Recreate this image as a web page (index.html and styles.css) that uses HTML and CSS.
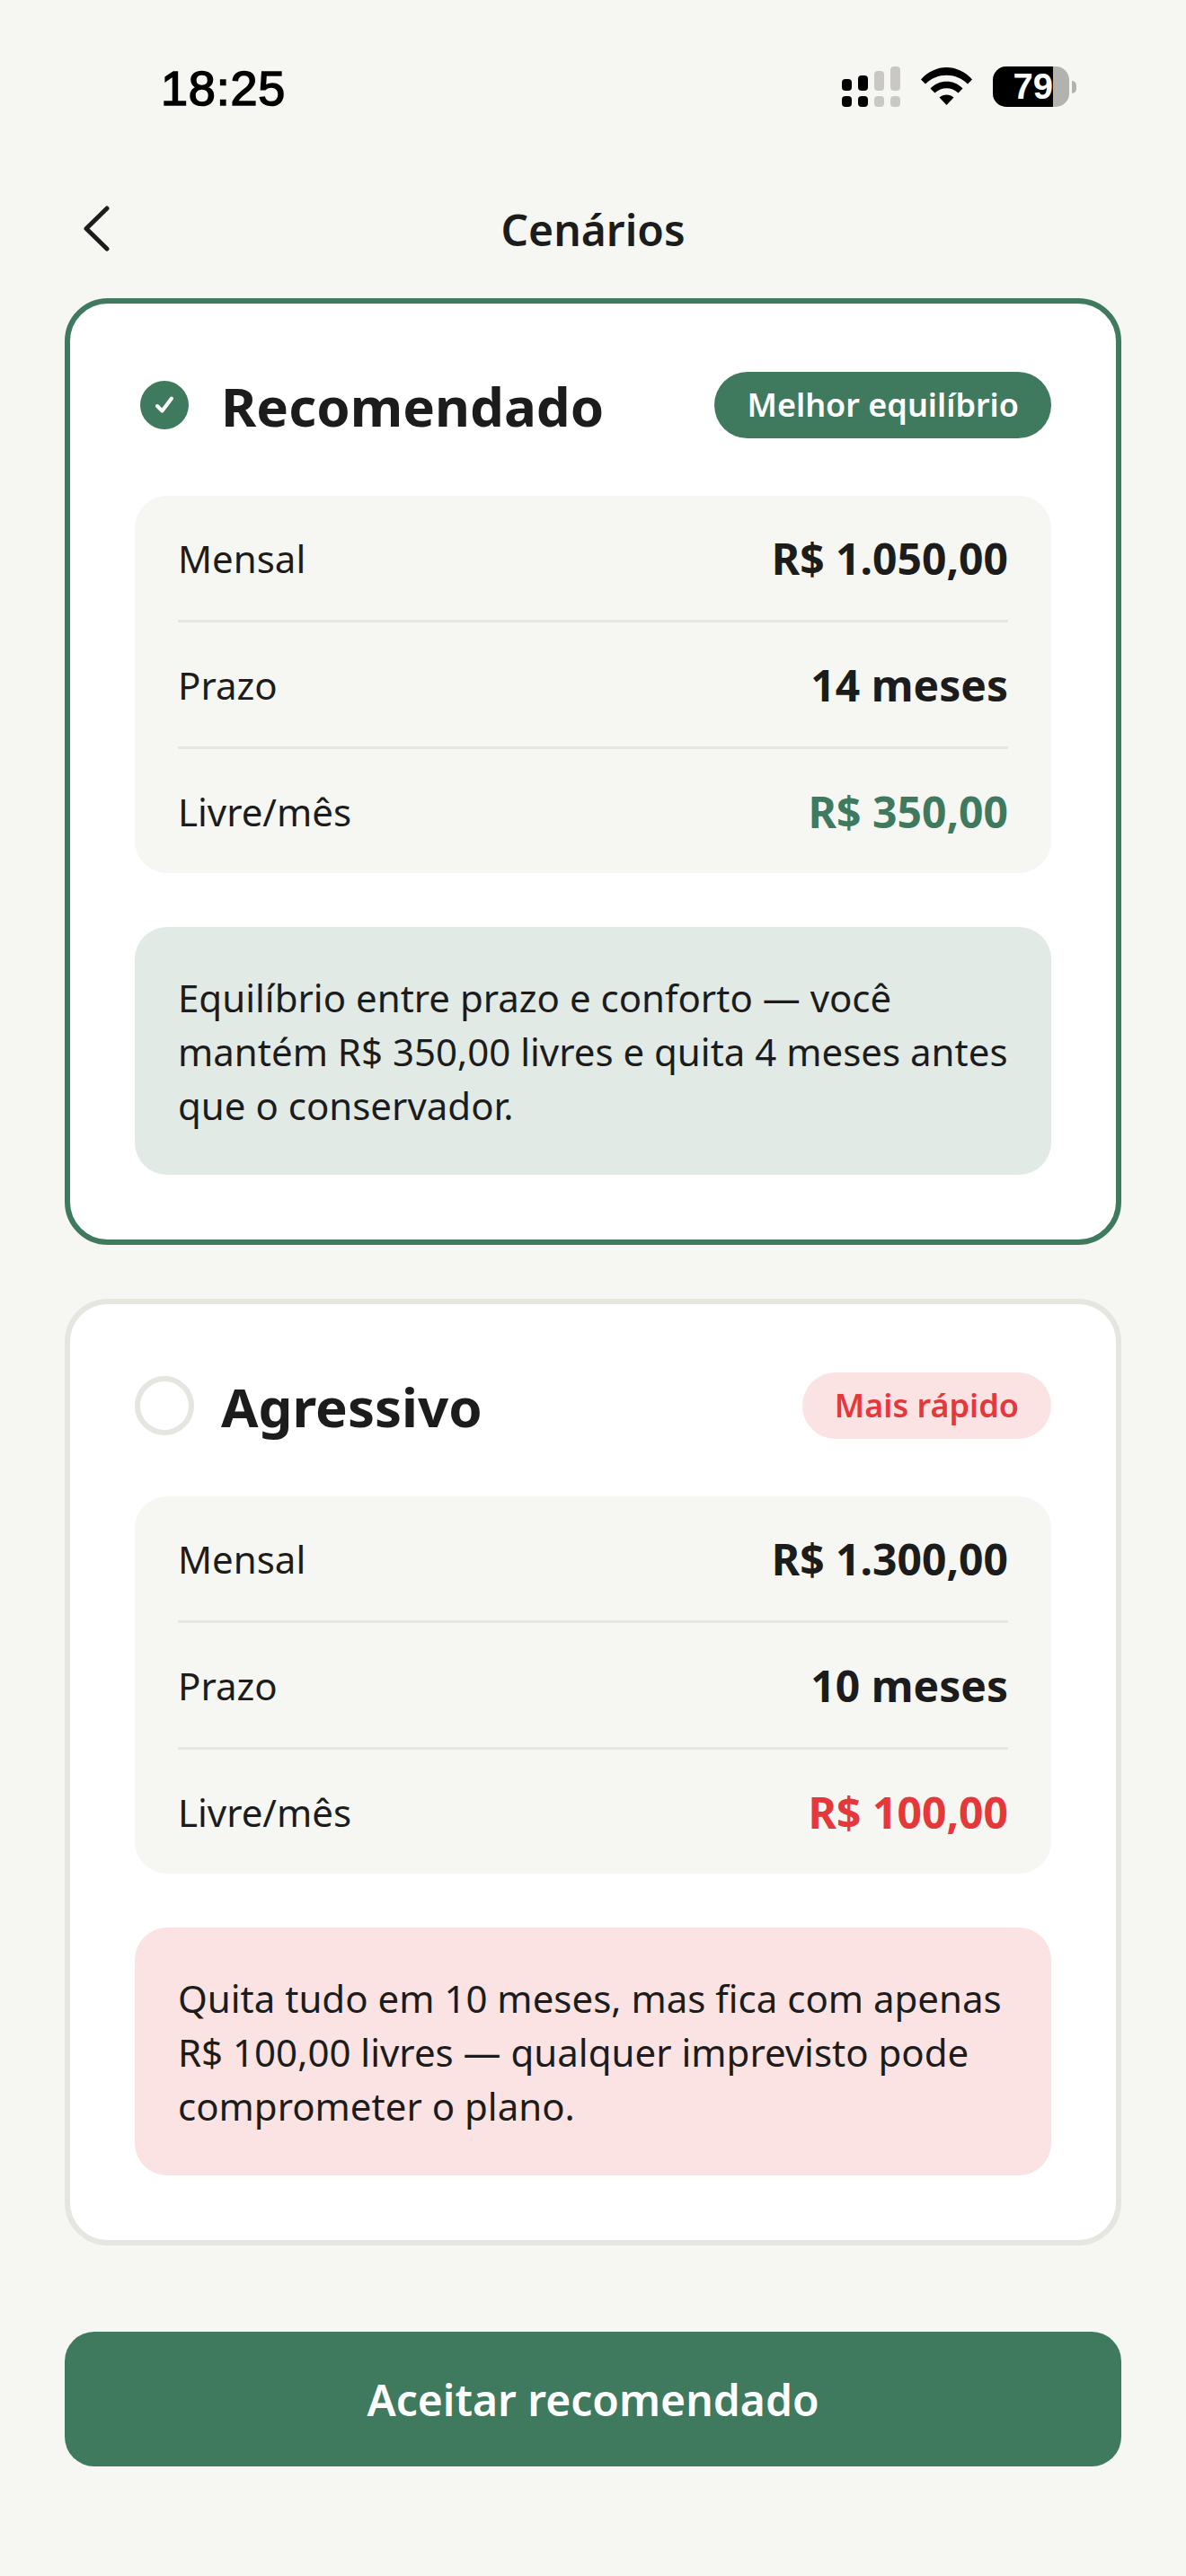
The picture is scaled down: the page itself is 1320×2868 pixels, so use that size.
FILE: index.html
```html
<!DOCTYPE html>
<html lang="pt-BR">
<head>
    <meta charset="UTF-8">
    <meta name="viewport" content="width=device-width, initial-scale=1.0">
    <title>Cenários</title>
    <link rel="stylesheet" href="styles.css">
</head>
<body>
    <div class="status-bar">
        <span class="time">18:25</span>
        <div class="status-icons">
            <svg class="signal" width="65" height="45" viewBox="0 0 65 45">
                <rect x="0" y="14" width="11" height="13" rx="4" fill="#000"/>
                <rect x="18" y="10" width="11" height="17" rx="4" fill="#000"/>
                <rect x="36" y="5" width="11" height="22" rx="4" fill="#c9c8c4"/>
                <rect x="54" y="0" width="11" height="27" rx="4" fill="#c9c8c4"/>
                <rect x="0" y="33" width="11" height="12" rx="4" fill="#000"/>
                <rect x="18" y="33" width="11" height="12" rx="4" fill="#000"/>
                <rect x="36" y="33" width="11" height="12" rx="4" fill="#c9c8c4"/>
                <rect x="54" y="33" width="11" height="12" rx="4" fill="#c9c8c4"/>
            </svg>
            <svg class="wifi" width="57" height="42" viewBox="0 0 57 42">
                <path d="M0 13.500C16 -4.500 41 -4.500 57 13.500L52 18.500C39 5.500 18 5.500 5 18.500Z" fill="#000"/>
                <path d="M10.500 23.500C20 13 37 13 46.500 23.500L41.500 28.500C34 21.500 23 21.500 15.500 28.500Z" fill="#000"/>
                <path d="M20.500 33.500C25 29.500 32 29.500 36.500 33.500L28.500 42Z" fill="#000"/>
            </svg>
            <div class="battery">
                <div class="battery-body">
                    <div class="battery-fill">79</div>
                </div>
                <div class="battery-nub"></div>
            </div>
        </div>
    </div>

    <header class="top-bar">
        <a class="back">
            <svg width="30" height="54" viewBox="0 0 30 54">
                <path d="M26 3L3 25.500L26 48" fill="none" stroke="#1c1c1c" stroke-width="5" stroke-linecap="round" stroke-linejoin="round"/>
            </svg>
        </a>
        <h1>Cenários</h1>
    </header>

    <main>
        <section class="card card-selected">
            <div class="card-head">
                <div class="radio">
                    <span class="radio-on">
                        <svg width="22" height="21" viewBox="0 0 22 21">
                            <path d="M3 12L8.500 17.500L19 3.500" fill="none" stroke="#fff" stroke-width="4" stroke-linecap="round" stroke-linejoin="round"/>
                        </svg>
                    </span>
                </div>
                <h2>Recomendado</h2>
                <span class="pill pill-green">Melhor equilíbrio</span>
            </div>
            <div class="table">
                <div class="row"><span>Mensal</span><strong>R$ 1.050,00</strong></div>
                <div class="row"><span>Prazo</span><strong>14 meses</strong></div>
                <div class="row"><span>Livre/mês</span><strong class="green">R$ 350,00</strong></div>
            </div>
            <p class="note note-green">Equilíbrio entre prazo e conforto — você mantém R$ 350,00 livres e quita 4 meses antes que o conservador.</p>
        </section>

        <section class="card">
            <div class="card-head">
                <div class="radio radio-off"></div>
                <h2>Agressivo</h2>
                <span class="pill pill-red">Mais rápido</span>
            </div>
            <div class="table">
                <div class="row"><span>Mensal</span><strong>R$ 1.300,00</strong></div>
                <div class="row"><span>Prazo</span><strong>10 meses</strong></div>
                <div class="row"><span>Livre/mês</span><strong class="red">R$ 100,00</strong></div>
            </div>
            <p class="note note-red">Quita tudo em 10 meses, mas fica com apenas R$ 100,00 livres — qualquer imprevisto pode comprometer o plano.</p>
        </section>

        <button class="accept">Aceitar recomendado</button>
    </main>
</body>
</html>
```

FILE: styles.css
```css
* {
    box-sizing: border-box;
}
body {
    font-family: 'Noto Sans', sans-serif;
    background-color: #f6f7f2;
    color: #1c1c1c;
    margin: 0;
    padding: 0;
    height: 2868px;
    overflow: hidden;
}
.status-bar {
    height: 172px;
    padding: 74px 122px 0 179px;
    display: flex;
    justify-content: space-between;
    align-items: flex-start;
}
.time {
    margin-top: 1px;
    font-family: 'Liberation Sans', sans-serif;
    font-size: 54px;
    line-height: 47px;
    letter-spacing: 0.8px;
    -webkit-text-stroke: 1.6px #000;
    color: #000;
}
.status-icons {
    display: flex;
    align-items: flex-start;
    gap: 23px;
}
.wifi {
    margin-top: 1px;
}
.battery {
    display: flex;
    align-items: center;
}
.battery-body {
    width: 85px;
    height: 45px;
    background-color: #b2b3ae;
    border-radius: 15px;
    overflow: hidden;
}
.battery-fill {
    width: 67px;
    height: 45px;
    background-color: #000;
    color: #fff;
    font-family: 'Liberation Sans', sans-serif;
    font-weight: 700;
    font-size: 40px;
    line-height: 45px;
    text-align: right;
}
.battery-nub {
    width: 5px;
    height: 14px;
    margin-left: 3px;
    background-color: #b2b3ae;
    border-radius: 0 7px 7px 0;
}
.top-bar {
    position: relative;
    height: 160px;
    padding-top: 7px;
    display: flex;
    align-items: center;
    justify-content: center;
}
.top-bar h1 {
    margin: 0;
    font-size: 48px;
    font-weight: 600;
}
.back {
    position: absolute;
    left: 93px;
    top: 57px;
    line-height: 0;
}
main {
    padding: 0 72px;
    display: flex;
    flex-direction: column;
    gap: 60px;
}
.card {
    background-color: #fff;
    border: 6px solid #e4e6e0;
    border-radius: 48px;
    padding: 75px 72px 72px;
}
.card-selected {
    border-color: #3f7a5f;
}
.card-head {
    display: flex;
    align-items: center;
    height: 75px;
    margin-bottom: 64px;
}
.card-head h2 {
    margin: 2px 0 0 30px;
    font-size: 60px;
    font-weight: 700;
    flex: 1;
}
.radio {
    width: 66px;
    height: 66px;
    display: flex;
    align-items: center;
    justify-content: center;
}
.radio-off {
    border: 6px solid #e4e6e0;
    border-radius: 50%;
}
.radio-on {
    width: 54px;
    height: 54px;
    border-radius: 50%;
    background-color: #3f7a5f;
    display: flex;
    align-items: center;
    justify-content: center;
}
.pill {
    height: 74px;
    padding: 0 36px;
    border-radius: 37px;
    font-size: 36px;
    font-weight: 600;
    line-height: 74px;
}
.pill-green {
    background-color: #3f7a5f;
    color: #fff;
}
.pill-red {
    background-color: #fbe3e3;
    color: #e5383b;
}
.table {
    background-color: #f6f7f2;
    border-radius: 36px;
    padding: 0 48px;
}
.row {
    height: 141px;
    display: flex;
    justify-content: space-between;
    align-items: center;
    border-bottom: 3px solid #e4e6e0;
    font-size: 42px;
}
.row:last-child {
    border-bottom: none;
    height: 138px;
}
.row strong {
    font-size: 48px;
    font-weight: 700;
}
.green {
    color: #3f7a5f;
}
.red {
    color: #e5383b;
}
.note {
    margin: 60px 0 0;
    padding: 49px 48px 47px;
    border-radius: 36px;
    font-size: 42px;
    line-height: 60px;
}
.note-green {
    background-color: #e2eae6;
}
.note-red {
    background-color: #fbe3e3;
}
.accept {
    margin-top: 36px;
    height: 150px;
    border: none;
    border-radius: 33px;
    background-color: #3f7a5f;
    color: #fff;
    font-family: 'Noto Sans', sans-serif;
    font-size: 48px;
    font-weight: 600;
}
```
